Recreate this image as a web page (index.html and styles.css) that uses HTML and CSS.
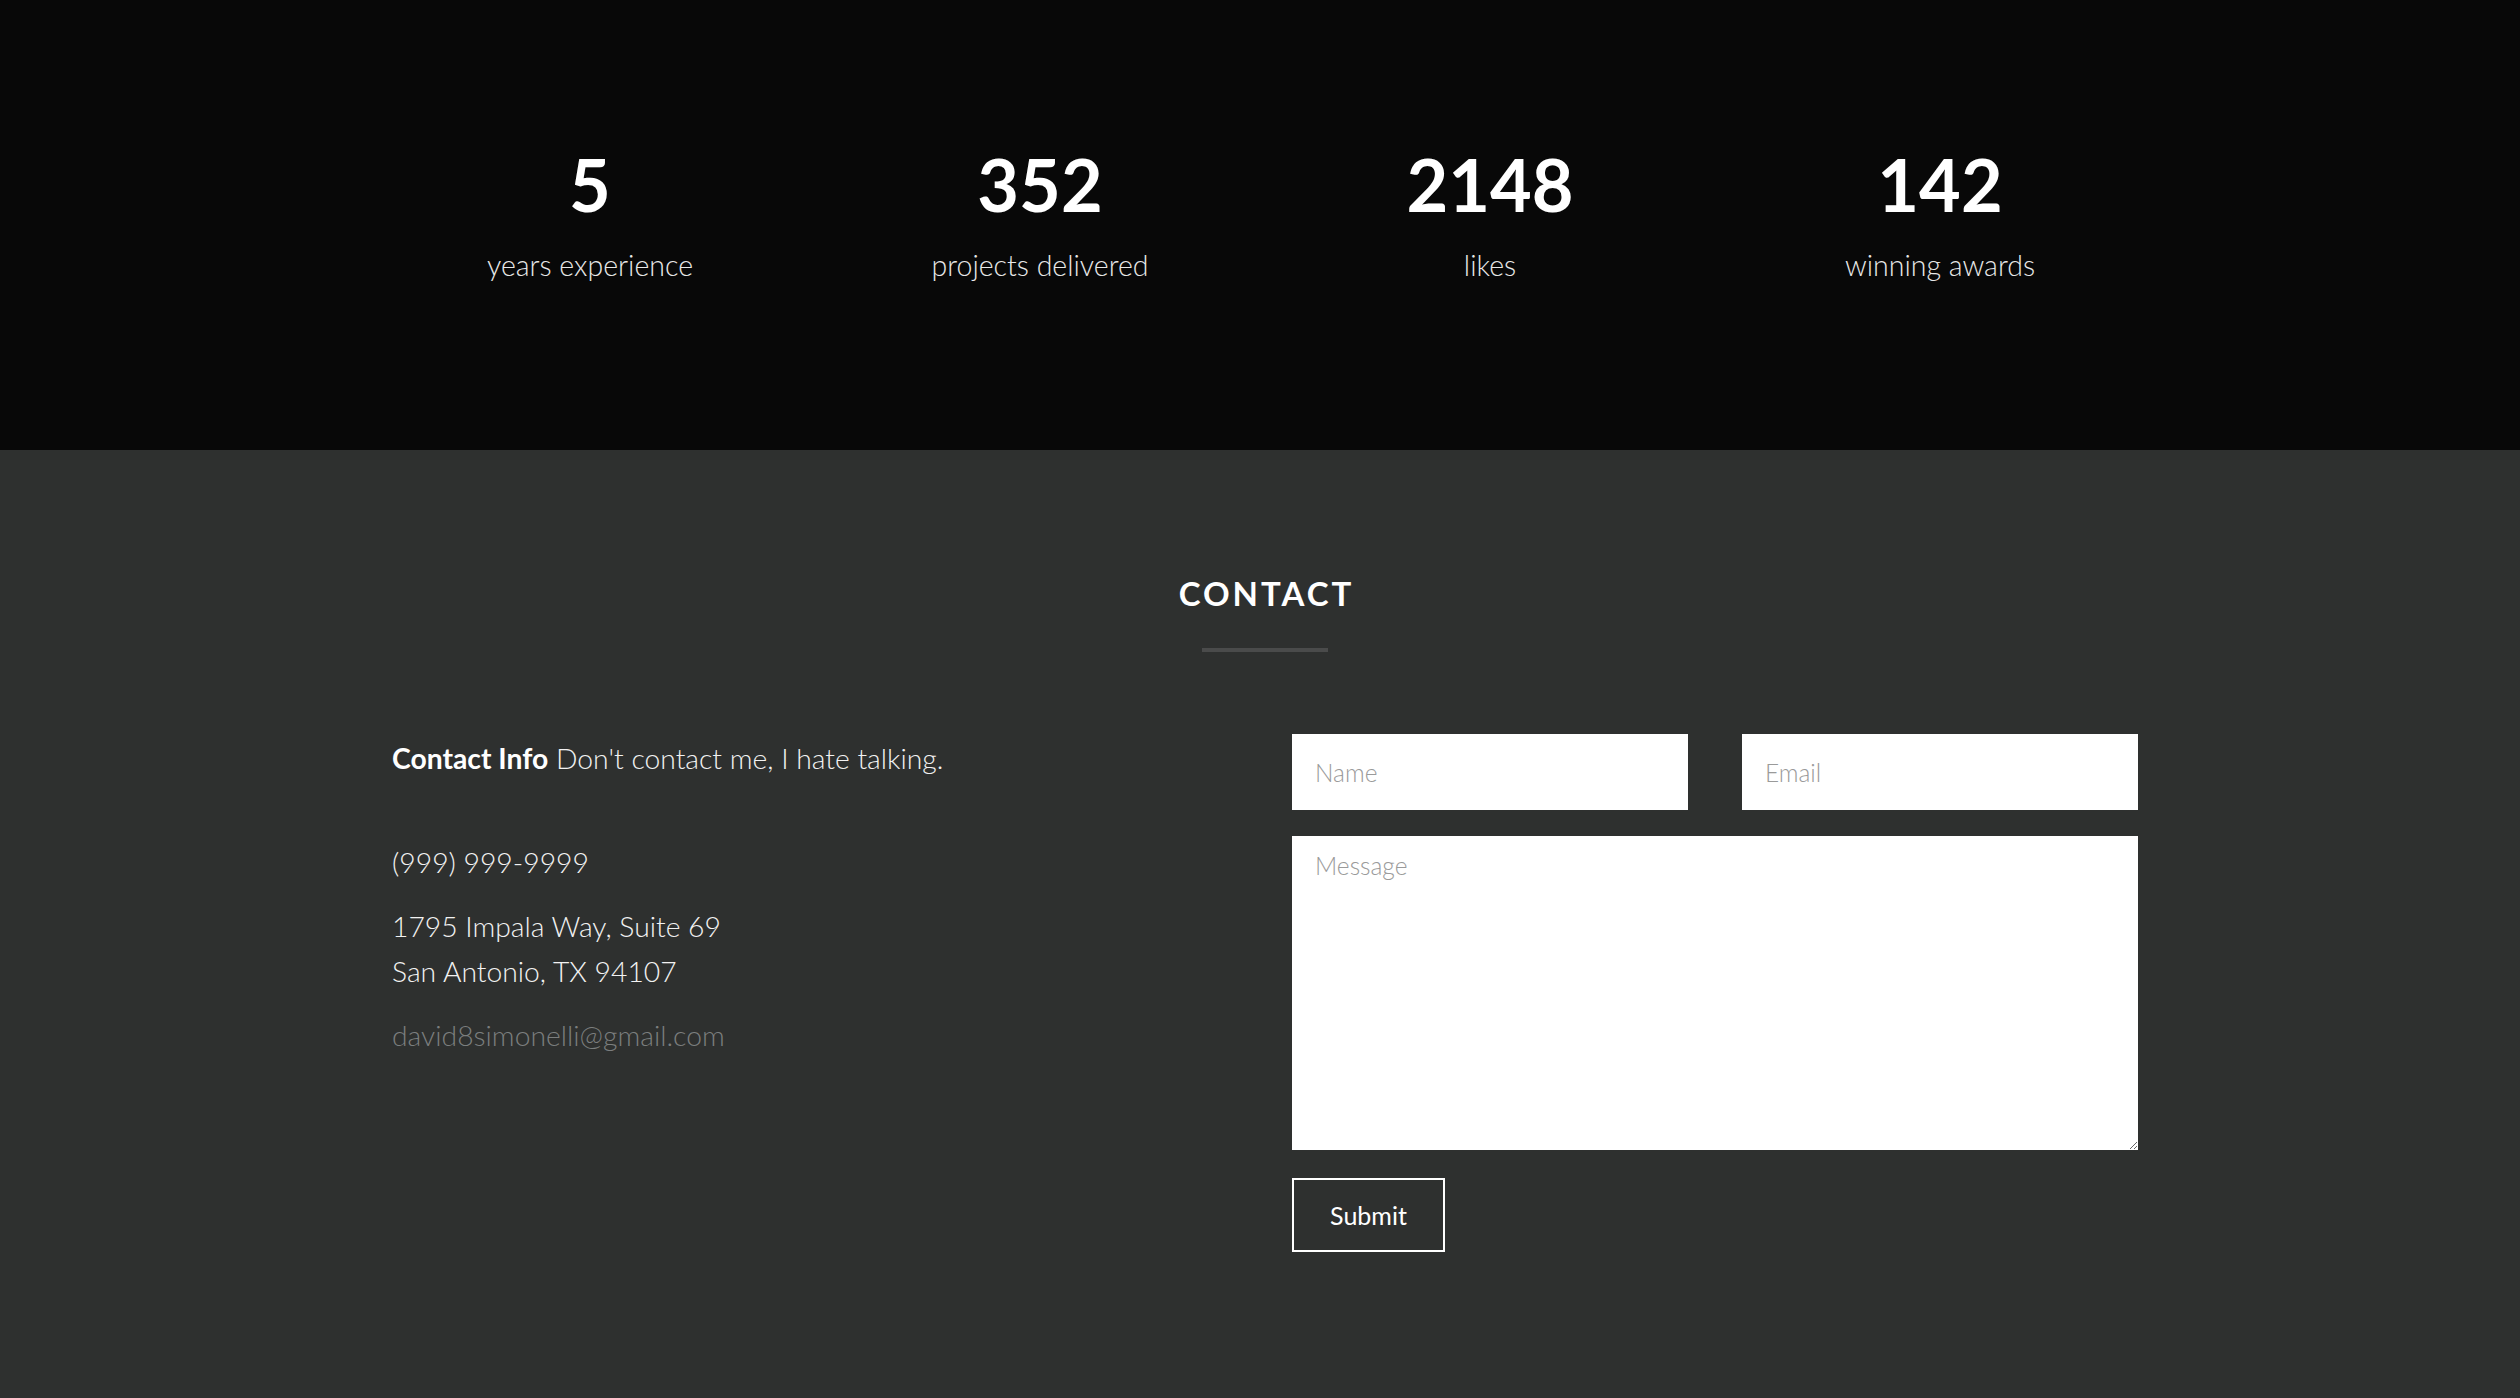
FILE: index.html
```html
<!DOCTYPE html>
<html lang="en">
<head>
<meta charset="utf-8">
<title>Portfolio</title>
<link rel="stylesheet" href="styles.css">
</head>
<body>
<section class="stats">
  <div class="container stats-row">
    <div class="stat"><div class="num">5</div><div class="label">years experience</div></div>
    <div class="stat"><div class="num">352</div><div class="label">projects delivered</div></div>
    <div class="stat"><div class="num">2148</div><div class="label">likes</div></div>
    <div class="stat"><div class="num">142</div><div class="label">winning awards</div></div>
  </div>
</section>
<section class="contact">
  <div class="container">
    <h2 class="title">CONTACT</h2>
    <div class="divider"></div>
    <div class="contact-row">
      <div class="col info">
        <p class="intro"><strong>Contact Info</strong> Don't contact me, I hate talking.</p>
        <p>(999) 999-9999</p>
        <p>1795 Impala Way, Suite 69<br>San Antonio, TX 94107</p>
        <p class="mail">david8simonelli@gmail.com</p>
      </div>
      <div class="col">
        <form class="form">
          <div class="form-row">
            <input type="text" placeholder="Name">
            <input type="email" placeholder="Email">
          </div>
          <textarea placeholder="Message"></textarea>
          <button type="button" class="submit">Submit</button>
        </form>
      </div>
    </div>
  </div>
</section>
</body>
</html>
```
FILE: styles.css
```css
* { box-sizing: border-box; }
html, body { margin: 0; padding: 0; }
body {
  font-family: Lato, "Open Sans", "Liberation Sans", sans-serif;
  background: #2e302f;
  color: #fff;
  width: 2520px;
  height: 1398px;
  overflow: hidden;
}
.container {
  width: 1800px;
  margin-left: calc(50% - 895px);
}
.stats {
  background: #080808;
  height: 450px;
  padding-top: 141px;
}
.stats-row {
  display: grid;
  grid-template-columns: repeat(4, 1fr);
}
.stat { text-align: center; }
.num {
  font-size: 72px;
  font-weight: 700;
  line-height: 1.2;
}
.label {
  margin-top: 21px;
  font-size: 28.5px;
  font-weight: 300;
  line-height: 1.2;
  color: #e8e8e8;
}
.contact {
  padding-top: 123px;
}
.title {
  margin: 0;
  text-align: center;
  font-size: 33px;
  font-weight: 700;
  letter-spacing: 3px;
  text-indent: 3px;
  line-height: 40px;
}
.divider {
  width: 126px;
  height: 4px;
  background: #4a4b4b;
  margin: 35px auto 82px;
}
.contact-row {
  display: grid;
  grid-template-columns: 1fr 1fr;
}
.col { padding: 0 27px; }
.info { padding-top: 2px; }
.info p {
  margin: 0 0 19px;
  font-size: 28.3px;
  font-weight: 300;
  line-height: 45px;
  color: #f2f2f2;
}
.info p.intro { margin-bottom: 59px; }
.info strong { font-weight: 700; color: #fff; }
.info p.mail { color: #7b7e7e; }
.form { display: flex; flex-direction: column; align-items: flex-start; }
.form-row {
  display: grid;
  grid-template-columns: 1fr 1fr;
  column-gap: 54px;
  width: 100%;
}
input, textarea {
  font-family: Lato, "Open Sans", sans-serif;
  font-size: 24.5px;
  font-weight: 300;
  color: #333;
  background: #fff;
  border: none;
  outline: none;
  border-radius: 0;
}
input {
  height: 76px;
  padding: 0 23px;
  width: 100%;
}
textarea {
  margin-top: 26px;
  width: 100%;
  height: 314px;
  padding: 15px 23px;
  resize: vertical;
  display: block;
}
::placeholder { color: #9a9a9a; opacity: 1; }
.submit {
  margin-top: 28px;
  width: 153px;
  height: 74px;
  background: transparent;
  border: 2px solid #fff;
  color: #fff;
  font-family: Lato, "Open Sans", sans-serif;
  font-size: 25px;
  font-weight: 400;
  border-radius: 0;
  cursor: pointer;
}
```
